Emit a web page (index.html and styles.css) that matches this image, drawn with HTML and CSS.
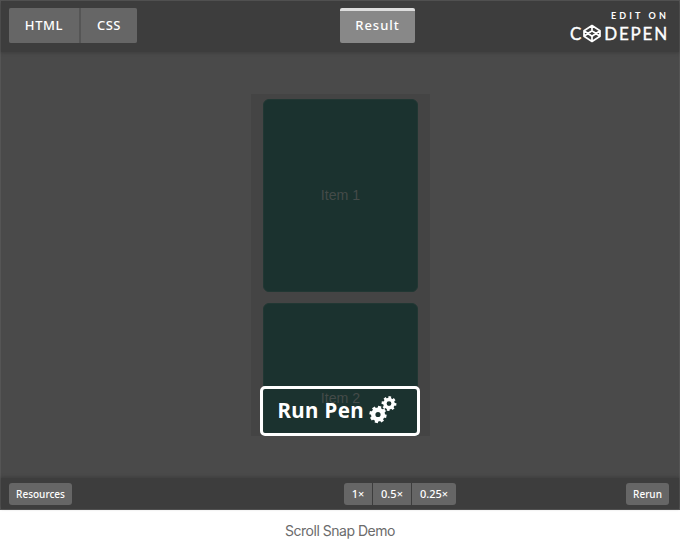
FILE: index.html
```
<!DOCTYPE html>
<html lang="en">
<head>
<meta charset="utf-8">
<title>Scroll Snap Demo</title>
<link rel="stylesheet" href="styles.css">
</head>
<body>
<figure>
  <div class="embed">
    <header class="top">
      <nav class="tabs"><a class="tab html"><span>HTML</span></a><a class="tab css"><span>CSS</span></a></nav>
      <a class="tab result"><span>Result</span></a>
      <a class="brand">
        <span class="edit">EDIT ON</span>
        <span class="logo"><span>C</span>
          <svg width="18" height="19" viewBox="0 0 18 19"><path d="M9 1.5 17 6.7V12.3L9 17.5 1 12.3V6.7ZM1 6.7 9 12.2 17 6.7M1 12.3 9 6.8 17 12.3M9 1.5V6.8M9 12.2V17.5"/></svg>
          <span class="depen">DEPEN</span></span>
      </a>
    </header>
    <main class="stage">
      <div class="scroller">
        <div class="item first">Item 1</div>
        <div class="item second"><span>Item 2</span></div>
      </div>
      <button class="run"><span>Run Pen</span>
        <svg width="28" height="28" viewBox="0 0 28 28">
          <g transform="translate(9 18.5)"><circle r="4.8" class="ring big"/><path class="teeth" d="M0-8.6V-5M0 5V8.6M-8.6 0H-5M5 0H8.6M-6-6-3.7-3.7M3.7 3.7 6 6M-6 6-3.7 3.7M3.7-3.7 6-6" transform="rotate(12)"/></g>
          <g transform="translate(20 7.6)"><circle r="4.1" class="ring"/><path class="teeth small" d="M0-7.4V-4M0 4V7.4M-7.4 0H-4M4 0H7.4M-5.1-5.1-3-3M3 3 5.1 5.1M-5.1 5.1-3 3M3-3 5.1-5.1" transform="rotate(7)"/></g>
        </svg>
      </button>
    </main>
    <footer class="bottom">
      <a class="btn resources">Resources</a>
      <div class="zooms"><a class="btn z1">1×</a><a class="btn z2">0.5×</a><a class="btn z3">0.25×</a></div>
      <a class="btn rerun">Rerun</a>
    </footer>
  </div>
  <figcaption>Scroll Snap Demo</figcaption>
</figure>
</body>
</html>
```
FILE: styles.css
```
* { box-sizing: border-box; }
body { margin: 0; background: #fff; font-family: "Noto Sans", sans-serif; }
figure { margin: 0; }
.embed { height: 510px; border: 1px solid #555; background: #4a4a4a; display: flex; flex-direction: column; }
.top { height: 51px; flex: none; padding: 7px 12px 0 8px; background: #3d3d3d; display: grid; grid-template-columns: 331px 75px 1fr; box-shadow: 0 1px 3px #3d3d3d; align-items: start; }
.tabs { display: flex; gap: 2px; width: 128px; background: #555; border-radius: 2px; }
.tab { height: 35px; display: flex; align-items: center; justify-content: center; background: #666; color: #fff; font-size: 13px; font-weight: 500; padding-bottom: 1px; }
.html { width: 70px; letter-spacing: .6px; border-radius: 2px 0 0 2px; }
.css { width: 56px; letter-spacing: .5px; border-radius: 0 2px 2px 0; }
.result { width: 75px; background: #888; border-top: 3px solid #ddd; border-radius: 2px; letter-spacing: 1px; padding-bottom: 4px; }
.brand { justify-self: end; color: #fff; font-family: Lato, sans-serif; display: flex; flex-direction: column; align-items: flex-end; }
.edit { font-size: 9px; line-height: 10px; letter-spacing: 3.1px; margin: 3px -2px 0 0; font-weight: 700; }
.logo { display: flex; align-items: center; height: 19px; margin-top: 3px; font-size: 17px; line-height: 19px; -webkit-text-stroke: .35px #fff; }
.logo svg { margin: 0 3px 0 2px; fill: none; stroke: #fff; stroke-width: 1.7; stroke-linejoin: round; }
.depen { letter-spacing: 1.8px; margin-right: -2px; }
.stage { flex: 1; position: relative; display: flex; justify-content: center; align-items: flex-start; padding: 42px 0 0 1px; }
.scroller { width: 179px; height: 342px; padding: 5px 12px 0; background: #444; overflow: hidden; font: 14.2px "Liberation Sans", sans-serif; color: #444b49; }
.item { display: flex; justify-content: center; align-items: center; height: 193px; padding-bottom: 1px; background: #1b322f; border: 1px solid #213733; border-radius: 6px; }
.second { margin-top: 11px; padding-bottom: 3px; }
.run { position: absolute; left: 259px; top: 334px; width: 160px; height: 50px; padding: 0 0 2px 15px; border: 3px solid #fff; border-radius: 5px; background: transparent; color: #fff; font: bold 20.5px "Noto Sans", sans-serif; display: flex; align-items: center; gap: 4px; }
.run span { width: 87px; white-space: nowrap; letter-spacing: .4px; text-indent: -1.5px; }
.ring { fill: none; stroke: #fff; stroke-width: 3.4; }
.big { stroke-width: 4.4; }
.teeth { stroke: #fff; stroke-width: 3.3; }
.small { stroke-width: 2.7; }
.bottom { height: 31px; flex: none; padding: 5px 10px 0 8px; background: #3d3d3d; box-shadow: 0 -1px 3px #3d3d3d; display: grid; grid-template-columns: 335px 112px 1fr; }
.btn { height: 22px; display: flex; align-items: center; justify-content: center; background: #666; color: #fff; font-size: 10px; font-weight: 500; border-radius: 3px; padding-bottom: 1px; }
.resources { width: 63px; }
.zooms { display: flex; gap: 1px; }
.z1 { width: 28px; border-radius: 3px 0 0 3px; font-size: 11px; }
.z2 { width: 38px; border-radius: 0; font-size: 11px; }
.z3 { width: 44px; border-radius: 0 3px 3px 0; font-size: 11px; }
.rerun { width: 43px; justify-self: end; }
figcaption { text-align: center; font: 14px/20px Inter, sans-serif; letter-spacing: -.48px; color: #6b6b6b; margin-top: 11px; }
```
